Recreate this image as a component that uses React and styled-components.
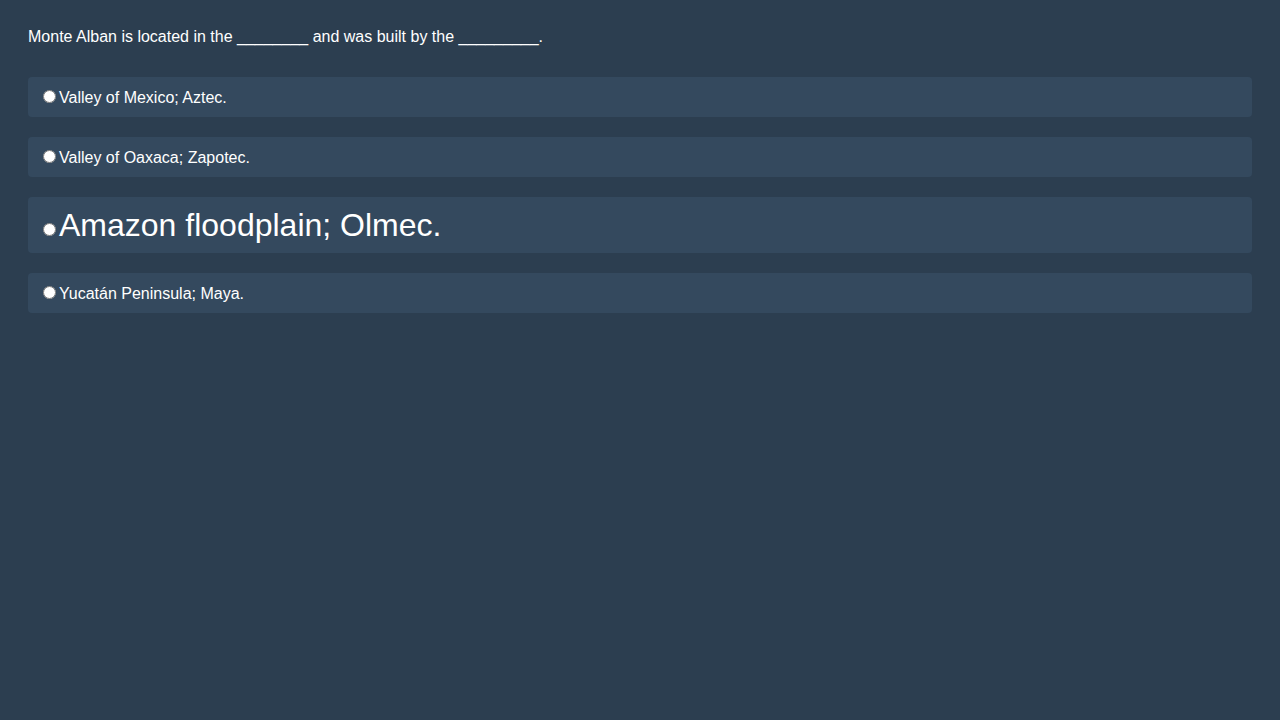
import React from "react";
import styled, { createGlobalStyle } from "styled-components";

const GlobalStyle = createGlobalStyle`
  html, body {
    margin: 0;
    padding: 0;
    background-color: #2c3e50;
  }
  body {
    font-family: "Liberation Sans", Arial, sans-serif;
    color: #ffffff;
    min-height: 100vh;
  }
`;

const Quiz = styled.div`
  padding: 28px;
`;

const Question = styled.div`
  font-size: 16px;
  line-height: 18px;
  margin-bottom: 31px;
`;

const Options = styled.div`
  display: flex;
  flex-direction: column;
  gap: 20px;
`;

const Option = styled.label`
  display: block;
  background-color: #34495e;
  border-radius: 4px;
  padding: ${({ $big }) => ($big ? "10px" : "11px 10px 9px")};
  font-size: ${({ $big }) => ($big ? "32px" : "16px")};
  line-height: ${({ $big }) => ($big ? "36px" : "20px")};
  cursor: pointer;
  input {
    margin: 2px 3px 0 5px;
  }
`;

const answers = [
  { text: "Valley of Mexico; Aztec." },
  { text: "Valley of Oaxaca; Zapotec." },
  { text: "Amazon floodplain; Olmec.", big: true },
  { text: "Yucatán Peninsula; Maya." },
];

export default function App() {
  return (
    <>
      <GlobalStyle />
      <Quiz>
        <Question>
          Monte Alban is located in the ________ and was built by the _________.
        </Question>
        <Options>
          {answers.map((a, i) => (
            <Option key={i} $big={a.big}>
              <input type="radio" name="answer" />
              {a.text}
            </Option>
          ))}
        </Options>
      </Quiz>
    </>
  );
}
